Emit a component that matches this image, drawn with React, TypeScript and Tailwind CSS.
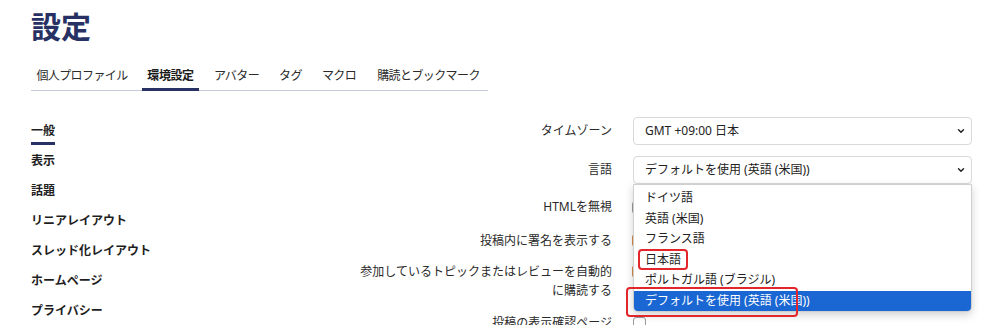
import { ChevronDown } from "lucide-react";

const tabs = [
  { label: "個人プロファイル", w: "w-[102px]" },
  { label: "環境設定", w: "w-[57px]" },
  { label: "アバター", w: "w-[57px]" },
  { label: "タグ", w: "w-[33px]" },
  { label: "マクロ", w: "w-[46px]" },
  { label: "購読とブックマーク", w: "w-[115px]" },
];
const sideNav = ["一般", "表示", "話題", "リニアレイアウト", "スレッド化レイアウト", "ホームページ", "プライバシー"];
const languages = ["ドイツ語", "英語 (米国)", "フランス語", "日本語", "ポルトガル語 (ブラジル)", "デフォルトを使用 (英語 (米国))"];

function SelectBox({ value, children }: { value: string; children?: React.ReactNode }) {
  return (
    <div className="relative w-[339px]">
      <div className="flex h-[28px] items-center justify-between rounded-[4px] border border-[#d9d9d9] bg-white pl-[11px] pr-[5px] text-[12px] text-[#222]">
        <span>{value}</span>
        <ChevronDown className="h-[10px] w-[10px] text-[#222]" strokeWidth={3.5} />
      </div>
      {children}
    </div>
  );
}

function Check({ tone = "gray" }: { tone?: "gray" | "orange" }) {
  return (
    <span
      className={
        tone === "orange"
          ? "ml-[-1px] block h-[13px] w-[13px] rounded-[3px] border border-[#d98a4a] bg-[#e8a060]"
          : "ml-[-1px] block h-[13px] w-[13px] rounded-[3px] border border-[#9a9a9a] bg-white"
      }
    />
  );
}

function LanguageMenu() {
  return (
    <div className="absolute left-0 top-[28px] z-10 w-[339px] rounded-b-[5px] border border-[#cfcfcf] bg-white pt-[3px] shadow-[0_3px_8px_rgba(0,0,0,0.18)]">
      {languages.map((lang, i) => {
        const selected = i === languages.length - 1;
        return (
          <div
            key={lang}
            className={
              selected
                ? "relative flex h-[20px] items-center rounded-b-[4px] bg-[#1a66d2] pl-[11px] text-[12px] text-white"
                : "relative flex h-[20.5px] items-center pl-[11px] text-[12px] text-[#222]"
            }
          >
            {lang}
            {/* annotation boxes drawn over the screenshot */}
            {lang === "日本語" && (
              <span className="absolute left-[4px] top-[-1px] h-[21px] w-[50px] rounded-[4px] border-2 border-[#e3262b]" />
            )}
            {selected && (
              <span className="absolute left-[-8px] top-[-4px] h-[30px] w-[172px] rounded-[4px] border-2 border-[#e3262b]" />
            )}
          </div>
        );
      })}
    </div>
  );
}

export default function App() {
  return (
    <div
      className="relative h-[325px] w-[999px] overflow-hidden bg-white"
      style={{ fontFamily: '"Noto Sans", "Noto Sans CJK JP", sans-serif' }}
    >
      <div className="pl-[31px] pt-[6px]">
        <h1 className="text-[30px] font-bold leading-[42px] text-[#283163]">設定</h1>

        <nav className="mt-[14px] flex w-[457px] gap-[9px] border-b border-[#c6cad8]">
          {tabs.map((tab, i) => (
            <span
              key={tab.label}
              className={
                i === 1
                  ? `-mb-px shrink-0 whitespace-nowrap border-b-[3px] border-[#283163] pb-[2px] pt-[5px] text-center text-[12px] font-bold tracking-[-0.4px] text-[#1b1b1b] ${tab.w}`
                  : `shrink-0 whitespace-nowrap pb-[5px] pt-[5px] text-center text-[12px] tracking-[-0.6px] text-[#2b2b2b] ${tab.w}`
              }
            >
              {tab.label}
            </span>
          ))}
        </nav>

        <div className="mt-[29px] flex">
          <ul className="w-[200px] shrink-0">
            {sideNav.map((item, i) => (
              <li key={item} className="h-[30px] whitespace-nowrap text-[12px] font-bold leading-[22px] text-[#1e1e1e]">
                <span className={i === 0 ? "inline-block border-b-[3px] border-[#283163]" : "inline-block"}>{item}</span>
              </li>
            ))}
          </ul>

          <div className="mt-[-3px] grid grid-cols-[381px_339px] gap-x-[21px] text-[12px] text-[#2a2a2a]">
            <div className="flex h-[28px] items-center justify-end">タイムゾーン</div>
            <SelectBox value="GMT +09:00 日本" />

            <div className="mt-[11px] flex h-[28px] items-center justify-end">言語</div>
            <div className="mt-[11px]">
              <SelectBox value="デフォルトを使用 (英語 (米国))">
                <LanguageMenu />
              </SelectBox>
            </div>

            <div className="mt-[11px] flex h-[24px] items-center justify-end">HTMLを無視</div>
            <div className="mt-[11px] flex h-[24px] items-center">
              <Check />
            </div>

            <div className="mt-[10px] flex h-[23px] items-center justify-end">投稿内に署名を表示する</div>
            <div className="mt-[10px] flex h-[23px] items-center">
              <Check tone="orange" />
            </div>

            <div className="mt-[10px] text-right leading-[19px]">
              参加しているトピックまたはレビューを自動的
              <br />
              に購読する
            </div>
            <div className="mt-[10px] flex h-[19px] items-center">
              <Check tone="orange" />
            </div>

            <div className="mt-[12px] flex h-[22px] items-center justify-end">投稿の表示確認ページ</div>
            <div className="mt-[12px] flex h-[22px] items-center">
              <span className="block h-[13px] w-[13px] rounded-[3px] border border-[#9a9a9a] bg-white" />
            </div>
          </div>
        </div>
      </div>
    </div>
  );
}
